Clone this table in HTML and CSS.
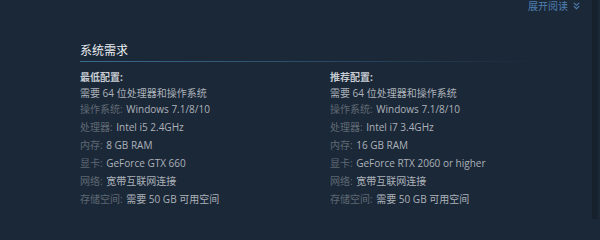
FILE: index.html
```html
<!DOCTYPE html>
<html lang="zh-CN">
<head>
<meta charset="utf-8">
<title>系统需求</title>
<link rel="stylesheet" href="styles.css">
</head>
<body>
<div class="page">
  <div class="main">
    <div class="readmore">
      <span class="readmore-text">展开阅读</span>
      <svg class="chev" width="7" height="8" viewBox="0 0 7 8"><polyline points="0.8,0.8 3.5,3.3 6.2,0.8" fill="none" stroke="currentColor" stroke-width="1.1"/><polyline points="0.8,4.2 3.5,6.7 6.2,4.2" fill="none" stroke="currentColor" stroke-width="1.1"/></svg>
    </div>
    <section class="sysreq">
      <h2 class="sysreq-title">系统需求</h2>
      <div class="cols">
        <div class="col">
          <div class="col-title">最低配置:</div>
          <ul class="req-list">
            <li>需要 64 位处理器和操作系统</li>
            <li><span class="label">操作系统:</span> Windows 7.1/8/10</li>
            <li><span class="label">处理器:</span> Intel i5 2.4GHz</li>
            <li><span class="label">内存:</span> 8 GB RAM</li>
            <li><span class="label">显卡:</span> GeForce GTX 660</li>
            <li><span class="label">网络:</span> 宽带互联网连接</li>
            <li><span class="label">存储空间:</span> 需要 50 GB 可用空间</li>
          </ul>
        </div>
        <div class="col">
          <div class="col-title">推荐配置:</div>
          <ul class="req-list">
            <li>需要 64 位处理器和操作系统</li>
            <li><span class="label">操作系统:</span> Windows 7.1/8/10</li>
            <li><span class="label">处理器:</span> Intel i7 3.4GHz</li>
            <li><span class="label">内存:</span> 16 GB RAM</li>
            <li><span class="label">显卡:</span> GeForce RTX 2060 or higher</li>
            <li><span class="label">网络:</span> 宽带互联网连接</li>
            <li><span class="label">存储空间:</span> 需要 50 GB 可用空间</li>
          </ul>
        </div>
      </div>
    </section>
  </div>
  <div class="strip"></div>
</div>
</body>
</html>
```
FILE: styles.css
```css
html, body {
  margin: 0;
  padding: 0;
  background: #1b2838;
}
body {
  width: 600px;
  height: 240px;
  overflow: hidden;
  font-family: "Open Sans", "Noto Sans CJK SC", sans-serif;
}
.page {
  display: flex;
  width: 600px;
  height: 240px;
}
.main {
  width: 592px;
  display: flex;
  flex-direction: column;
}
.strip {
  width: 6px;
  height: 219px;
  background: #17212e;
}
.readmore {
  display: flex;
  justify-content: flex-end;
  align-items: center;
  gap: 5px;
  height: 12px;
  padding-right: 12px;
  color: #4f7fb0;
  font-size: 10px;
  line-height: 12px;
}
.chev {
  display: block;
}
.sysreq {
  margin: 32px 0 0 80px;
}
.sysreq-title {
  margin: 0;
  width: 460px;
  font-size: 12px;
  line-height: 14px;
  font-weight: normal;
  color: #e8ecef;
  padding-bottom: 3px;
  background: linear-gradient(to right, #3a6a8c 0%, #2d5270 40%, rgba(27, 40, 56, 0) 100%) no-repeat left bottom / 100% 1px;
  padding-bottom: 4px;
}
.cols {
  display: grid;
  grid-template-columns: 250px 250px;
  margin-top: 7px;
}
.col {
  font-size: 10px;
  line-height: 16px;
  color: #acb2b8;
}
.col-title {
  font-weight: bold;
  color: #c6ccd2;
}
.req-list {
  list-style: none;
  margin: 0;
  padding: 0;
}
.req-list li {
  white-space: nowrap;
}
.req-list li:nth-child(n+3) {
  margin-top: 2px;
}
.label {
  color: #5f6973;
  margin-right: 1px;
}
```
